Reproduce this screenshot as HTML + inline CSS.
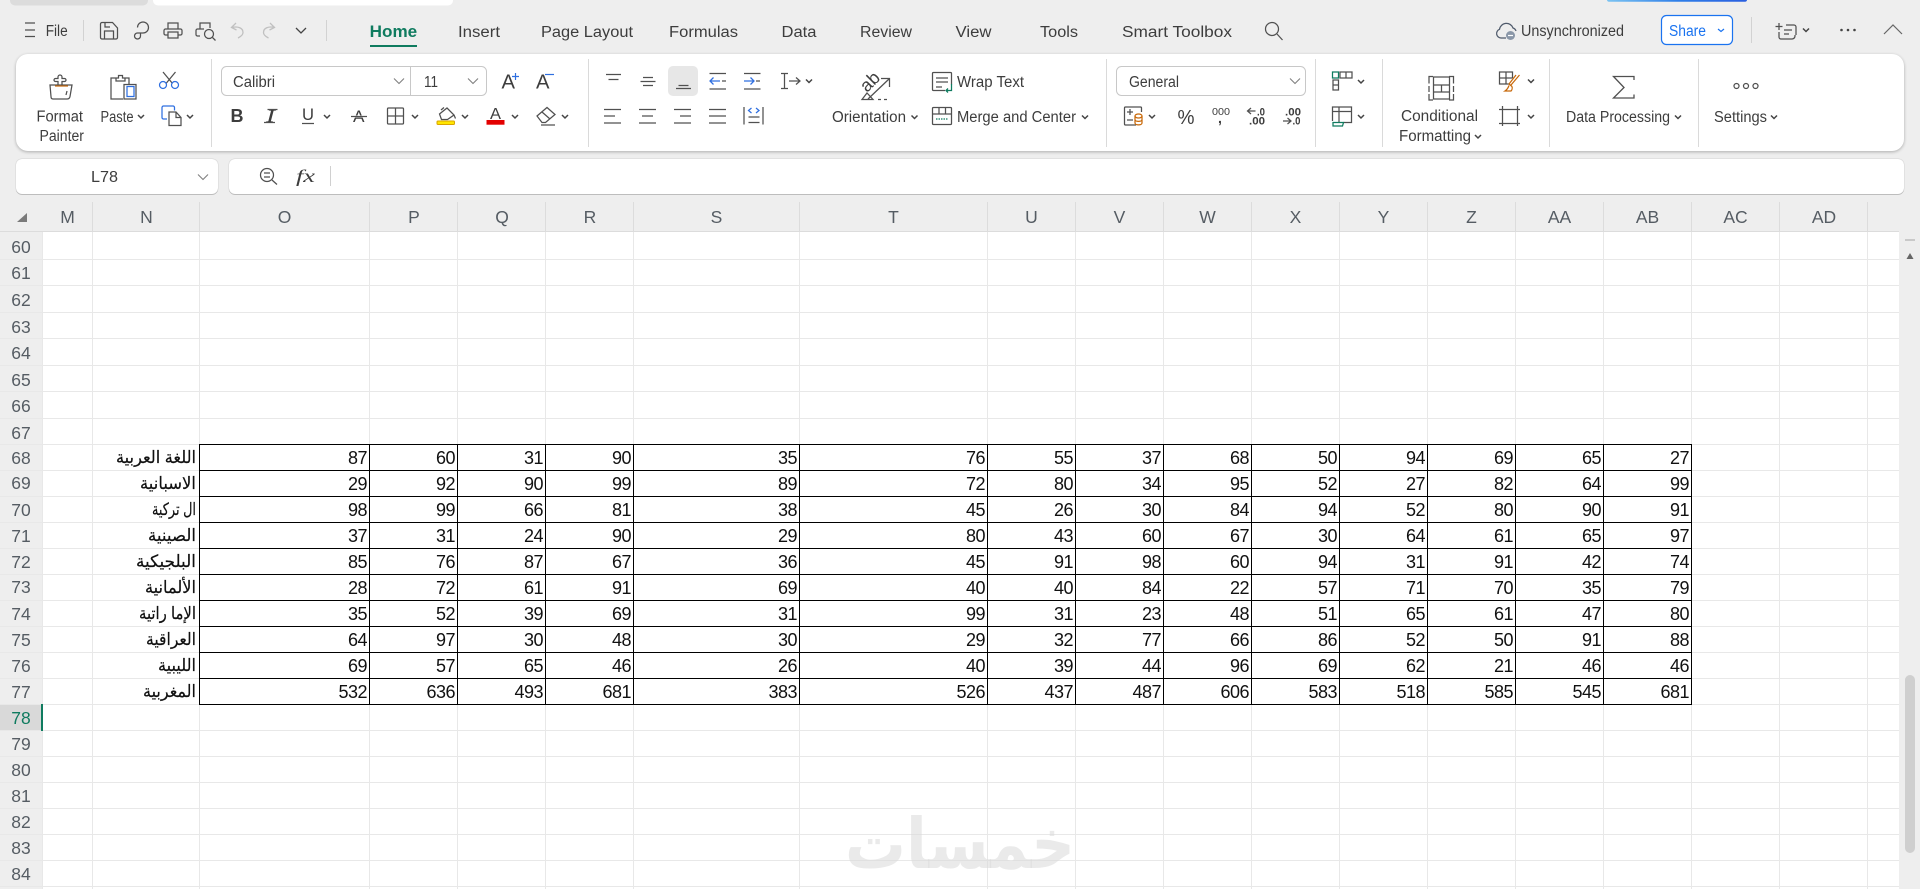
<!DOCTYPE html>
<html lang="en"><head><meta charset="utf-8"><title>Spreadsheet</title>
<style>
html,body{margin:0;padding:0;width:1920px;height:889px;overflow:hidden;background:#eee;font-family:"Liberation Sans","DejaVu Sans",sans-serif}
.card{position:absolute;background:#fff;box-sizing:border-box}
#rb{left:16px;top:54px;width:1888px;height:97px;border-radius:12px;box-shadow:0 1px 3px rgba(0,0,0,.28)}
#nb{left:16px;top:159px;width:201.5px;height:34.5px;border-radius:6px;box-shadow:0 0 1px rgba(0,0,0,.35),0 1px 0 #c8c8c8}
#fb{left:229px;top:159px;width:1675px;height:34.5px;border-radius:6px;box-shadow:0 0 1px rgba(0,0,0,.35),0 1px 0 #c8c8c8}
svg#s{position:absolute;left:0;top:0}
svg text{font-family:"Liberation Sans","DejaVu Sans",sans-serif;fill:#3d3d3d}
.t{font-size:15.5px}
.h{font-size:17.5px;fill:#555c63;text-anchor:middle}
.a{font-size:17px;fill:#111;stroke:#111;stroke-width:.2;direction:rtl;text-anchor:start}
.i{fill:none;stroke:#505050;stroke-width:1.25}
.b{fill:none;stroke:#2f6fe0;stroke-width:1.25}
.g{fill:none;stroke:#0f7b5f;stroke-width:1.25}
.o{fill:none;stroke:#c8690a;stroke-width:1.25}
table{position:absolute;left:199px;top:444px;border-collapse:collapse;table-layout:fixed;width:1493px}
td{border:1px solid #000;height:26px;padding:2px 2px 0 0;text-align:right;font-size:18px;letter-spacing:-.5px;line-height:23px;color:#111;box-sizing:border-box;overflow:hidden}
tr{height:26px}
</style></head><body>
<div class="card" id="rb"></div><div class="card" id="nb"></div><div class="card" id="fb"></div>
<svg id="s" width="1920" height="889" viewBox="0 0 1920 889" xmlns="http://www.w3.org/2000/svg">
<defs>
<linearGradient id="bl" x1="0" x2="1"><stop offset="0" stop-color="#7cc4f2"/><stop offset=".5" stop-color="#2f7fe8"/><stop offset="1" stop-color="#2a5fe0"/></linearGradient>
<path id="c" d="M-3-1.5l3 3 3-3" fill="none" stroke="#444" stroke-width="1.5"/>
<path id="v" d="M-5-2.5l5 5 5-5" fill="none" stroke="#808080" stroke-width="1.1"/>
</defs>
<!-- top strip -->
<rect x="10" y="-6" width="138" height="11.5" rx="5" fill="#dcdcdc"/>
<rect x="153" y="-6" width="300" height="11.5" rx="5" fill="#fff"/>
<rect x="1607" y="-4" width="140" height="5.7" rx="2" fill="url(#bl)"/>
<!-- title row -->
<path class="i" d="M25 23h10M25 30h10M25 36.5h10"/>
<text class="t" x="45.7" y="36" textLength="22" lengthAdjust="spacingAndGlyphs">File</text>
<path d="M83.5 20v21M326.5 20v21M1751.5 17v26" stroke="#d2d2d2" fill="none"/>
<path class="i" d="M102 22.5h10.5l5 5.5v9.5a1.5 1.5 0 0 1-1.5 1.5h-14a1.5 1.5 0 0 1-1.5-1.5V24a1.5 1.5 0 0 1 1.5-1.5zM104.5 39v-8h9v8M105 23v4h5"/>
<path class="i" d="M137.5 27.5a5.5 5.5 0 1 1 5.5 5.5h-5.5a3 3 0 1 0 3 3V33"/>
<path class="i" d="M168 29v-6h10v6M168 35h-2.5a1.5 1.5 0 0 1-1.5-1.5v-3a1.5 1.5 0 0 1 1.5-1.5h15a1.5 1.5 0 0 1 1.5 1.5v3a1.5 1.5 0 0 1-1.5 1.5H178M168 32h10v6h-10z"/>
<path class="i" d="M200 29v-6h10v5M200 36h-2.5a1.5 1.5 0 0 1-1.5-1.5v-4a1.5 1.5 0 0 1 1.5-1.5H204M212.5 37.5l3 3"/><circle class="i" cx="209" cy="34" r="4.5"/>
<path d="M236 23l-4.500 4.500 5 2.500M232 27.500c6-1.500 11 .5 11 5 0 3-3 4.500-5 5.500" fill="none" stroke="#c0c0c0" stroke-width="1.3"/>
<path d="M270 23l4.500 4.500-5 2.500M274.500 27.500c-6-1.500-11 .5-11 5 0 3 3 4.500 5 5.500" fill="none" stroke="#c0c0c0" stroke-width="1.3"/>
<path d="M296 28l5 5 5-5" fill="none" stroke="#444" stroke-width="1.3"/>
<!-- tabs -->
<text x="369.7" y="37" font-size="16.500" font-weight="700" style="fill:#0f7b5f" textLength="47.500" lengthAdjust="spacingAndGlyphs">Home</text>
<rect x="370" y="45" width="47" height="2" fill="#0f7b5f"/>
<text class="t" font-size="16" x="458" y="37" textLength="42" lengthAdjust="spacingAndGlyphs">Insert</text>
<text class="t" x="541" y="37" textLength="92" lengthAdjust="spacingAndGlyphs">Page Layout</text>
<text class="t" x="669" y="37" textLength="69" lengthAdjust="spacingAndGlyphs">Formulas</text>
<text class="t" x="781.500" y="37" textLength="35" lengthAdjust="spacingAndGlyphs">Data</text>
<text class="t" x="860" y="37" textLength="52" lengthAdjust="spacingAndGlyphs">Review</text>
<text class="t" x="955.500" y="37" textLength="36" lengthAdjust="spacingAndGlyphs">View</text>
<text class="t" x="1040" y="37" textLength="38" lengthAdjust="spacingAndGlyphs">Tools</text>
<text class="t" x="1122" y="37" textLength="110" lengthAdjust="spacingAndGlyphs">Smart Toolbox</text>
<circle class="i" cx="1272" cy="29" r="6.500"/><path class="i" d="M1277 34l5.500 6"/>
<!-- top right -->
<path class="i" style="stroke:#4f5a6b" d="M1506 38h-5a4.500 4.500 0 0 1-1.500-8.700 7 7 0 0 1 13.500-1.300 4.500 4.500 0 0 1 3 3"/>
<circle cx="1510.500" cy="35.500" r="4.500" fill="#8a97a8"/><path d="M1508 35.500h5" stroke="#fff" stroke-width="1.200"/>
<text class="t" x="1521" y="36" textLength="103" lengthAdjust="spacingAndGlyphs">Unsynchronized</text>
<rect x="1661.500" y="15.500" width="71" height="29" rx="5" fill="#fff" stroke="#1a73f0" stroke-width="1.200"/>
<text class="t" x="1669" y="36" style="fill:#1a73f0" textLength="37" lengthAdjust="spacingAndGlyphs">Share</text>
<path d="M1718 29l3 2.500 3-2.500" fill="none" stroke="#1a73f0" stroke-width="1.200"/>
<path class="i" d="M1779 23v7M1775.500 26.500h7M1786 25h8a2 2 0 0 1 2 2v8M1779 32v5a2 2 0 0 0 2 2h11a3 3 0 0 0 3-3v-1M1784 30h8M1784 34h5"/>
<use href="#c" x="1806" y="30"/>
<circle cx="1841.500" cy="30" r="1.300" fill="#444"/><circle cx="1848" cy="30" r="1.300" fill="#444"/><circle cx="1854.500" cy="30" r="1.300" fill="#444"/>
<path d="M1884 34l9-9 9 9" fill="none" stroke="#666" stroke-width="1.200"/>
<!-- ribbon dividers -->
<path d="M211.500 59v88M588.500 59v88M1106.500 59v88M1315.500 59v88M1382.500 59v88M1549.500 59v88M1698.500 59v88" stroke="#dadada" fill="none"/>
<!-- clipboard group -->
<path class="i" d="M50 85h22l-2 11.500q-.5 2.500-3 2.500H53q-2 0-2-2.500zM58 85v-3.500h-2.500a1.500 1.500 0 0 1 0-3H58V77a2 2 0 0 1 4 0v1.500h2.500a1.500 1.500 0 0 1 0 3H62V85M66 95l1-4"/>
<path d="M55 86h13" stroke="#c8690a" stroke-width="1.200"/>
<text class="t" x="36.500" y="121.500" textLength="46.500" lengthAdjust="spacingAndGlyphs">Format</text>
<text class="t" x="39.500" y="141" textLength="44.500" lengthAdjust="spacingAndGlyphs">Painter</text>
<path class="i" d="M116 78h-5v21h12M125 78h4v6M116 81v-3h2.500v-2.500h4V78h2.500v3zM124 84.500h12v14.500h-12z"/>
<rect class="b" x="127" y="86.500" width="7" height="10"/>
<text class="t" x="100.500" y="122" textLength="33" lengthAdjust="spacingAndGlyphs">Paste</text>
<use href="#c" x="141" y="116.500"/>
<path class="i" d="M163 72l9.500 11.500M175.500 72L166 83.500"/>
<circle class="b" cx="163" cy="85" r="3.500"/><circle class="b" cx="175" cy="85" r="3.500"/>
<path class="b" d="M167 119h-3.500a1.500 1.500 0 0 1-1.500-1.500v-10a1.500 1.500 0 0 1 1.500-1.500H173a1.500 1.500 0 0 1 1.500 1.500v3"/>
<path class="i" d="M169 112h7l5 5.500v8h-12zM176 112v5.500h5"/>
<use href="#c" x="190" y="116.500"/>
<!-- font -->
<rect x="221.500" y="66.500" width="265" height="29" rx="5" fill="#fff" stroke="#c8c8c8"/>
<path d="M410.500 66.500v29" stroke="#c8c8c8"/>
<text class="t" x="233" y="87" textLength="42" lengthAdjust="spacingAndGlyphs">Calibri</text>
<use href="#v" x="399" y="81"/>
<text class="t" x="424" y="87" textLength="14" lengthAdjust="spacingAndGlyphs">11</text>
<use href="#v" x="473" y="81"/>
<text x="501.500" y="88.500" font-size="20" textLength="13.500" lengthAdjust="spacingAndGlyphs">A</text>
<path d="M512 76.500h7M515.500 73v7" stroke="#2f6fe0" stroke-width="1.200"/>
<text x="536" y="88.500" font-size="20" textLength="13.500" lengthAdjust="spacingAndGlyphs">A</text>
<path d="M545 74.500h9" stroke="#2f6fe0" stroke-width="1.200"/>
<text x="230.500" y="122" font-size="18" font-weight="700">B</text>
<text x="266" y="122" font-size="18" style="font-family:'Liberation Serif',serif;font-style:italic" textLength="9" lengthAdjust="spacingAndGlyphs">I</text>
<path class="i" d="M264 122.500h11M267.500 109.500h10"/>
<text x="302" y="120" font-size="16.500" textLength="12" lengthAdjust="spacingAndGlyphs">U</text><path class="i" d="M302 123.500h12"/>
<use href="#c" x="327" y="116.500"/>
<text x="353" y="122" font-size="17" textLength="11.500" lengthAdjust="spacingAndGlyphs">A</text><path class="i" d="M351 116.500h16" style="stroke:#fff;stroke-width:2"/><path class="i" d="M351 116.500h16"/>
<path class="i" d="M387.500 109a1 1 0 0 1 1-1h14a1 1 0 0 1 1 1v14a1 1 0 0 1-1 1h-14a1 1 0 0 1-1-1zM395.500 108v16M387.500 116h16"/>
<use href="#c" x="415" y="116.500"/>
<path class="i" d="M447 108l7 7-6.500 4.500h-6l-2-5.500zM441 110l3-2.500M454 115l1.500 3.500"/>
<rect x="437" y="121" width="17.500" height="3.500" rx="1" fill="#ffe600" stroke="#d9a400"/>
<use href="#c" x="465" y="116.500"/>
<text x="490" y="119" font-size="15.500" textLength="11" lengthAdjust="spacingAndGlyphs">A</text>
<rect x="486.500" y="120" width="18" height="4.700" fill="#e30000"/>
<use href="#c" x="515" y="116.500"/>
<path class="i" d="M537 116l10-8.500 8 7-9.500 8H542zM542 112l8 7M541 125h14"/>
<use href="#c" x="565" y="116.500"/>
<!-- align -->
<rect x="668" y="66" width="30" height="30" rx="5" fill="#e7e7e7"/>
<path class="i" d="M606 74.500h15M608.500 79.500h10M643 77.500h10M640.500 81.500h15M643 85.500h10M678.500 85.500h10M676 88.500h15M709.500 73.500h16.500M709.500 89h16.500M722 81h4M744 73.500h16.500M744 89h16.500M744 81h0M756 81h4M781 73.500h7M781 88.500h7M784.500 73.500v15M789 81h11M796 77.500l4 3.500-4 3.500"/>
<path class="b" d="M710 81h10M713.500 77.500L710 81l3.500 3.500M744 81h10M750.500 77.500L754 81l-3.500 3.500"/>
<use href="#c" x="809" y="81"/>
<path class="i" d="M604 109.500h17M604 116h11M604 123h17M639 109.500h17M642 116h11M639 123h17M674 109.500h17M680 116h11M674 123h17M709 109.500h17M709 116h17M709 123h17M744 107v17.500M763 107v17.500M748.500 117h11M748.500 122.500h11"/>
<path class="b" d="M751.500 108l-3 2.500 3 2.500M756 108l3 2.500-3 2.500"/>
<!-- orientation -->
<text transform="translate(867 93) rotate(-45)" font-size="18">ab</text>
<path class="i" d="M868 99l21-20M881 78.500h8.500v8.500M862 99.500l5-6.500 6 6.500zM878 99.500h3M884 99.500h3"/>
<text class="t" x="832" y="122" textLength="74" lengthAdjust="spacingAndGlyphs">Orientation</text>
<use href="#c" x="914.500" y="117"/>
<path class="i" d="M945 90.500h-11.500a1 1 0 0 1-1-1v-16a1 1 0 0 1 1-1h17a1 1 0 0 1 1 1v11M936 78h12M936 82h12M936 87h6"/>
<path class="g" d="M951.500 84v6.500H946M948 88.500l-2 2 2 2"/>
<text class="t" x="957" y="87" textLength="67" lengthAdjust="spacingAndGlyphs">Wrap Text</text>
<rect class="i" x="932.500" y="107.500" width="19" height="17" rx="1"/>
<path class="i" d="M932.500 114h19M939 107.500v6.500M945.500 107.500v6.500"/>
<path class="g" d="M936 119h12" stroke-dasharray="1.500 1"/>
<text class="t" x="957" y="122" textLength="119" lengthAdjust="spacingAndGlyphs">Merge and Center</text>
<use href="#c" x="1085" y="117"/>
<!-- number -->
<rect x="1116.500" y="66.500" width="189" height="29" rx="5" fill="#fff" stroke="#c8c8c8"/>
<text class="t" x="1129" y="87" textLength="50" lengthAdjust="spacingAndGlyphs">General</text>
<use href="#v" x="1295" y="81"/>
<path class="i" d="M1136 125h-10.500a1 1 0 0 1-1-1v-16a1 1 0 0 1 1-1h15a1 1 0 0 1 1 1v4M1127 112h6M1130 109v6M1127 120h6"/>
<ellipse class="o" cx="1138.500" cy="116" rx="3.500" ry="2"/><path class="o" d="M1135 116v7c0 2.500 7 2.500 7 0v-7M1135 119.500c0 2.500 7 2.500 7 0"/>
<use href="#c" x="1152" y="116.500"/>
<text x="1177.500" y="124" font-size="20" textLength="17" lengthAdjust="spacingAndGlyphs">%</text>
<text x="1212" y="115" font-size="10.500" textLength="18" lengthAdjust="spacingAndGlyphs">000</text>
<text x="1218" y="123" font-size="14" font-weight="700">,</text>
<path class="i" d="M1247.500 111h8M1251 108l-3.500 3 3.500 3"/>
<text x="1257" y="115.500" font-size="11" font-weight="700" textLength="8" lengthAdjust="spacingAndGlyphs">.0</text>
<text x="1249" y="124.500" font-size="11" font-weight="700" textLength="16" lengthAdjust="spacingAndGlyphs">.00</text>
<text x="1285" y="115.500" font-size="11" font-weight="700" textLength="16" lengthAdjust="spacingAndGlyphs">.00</text>
<path class="i" d="M1283 121h8M1287.500 118l3.500 3-3.500 3"/>
<text x="1292.500" y="124.500" font-size="11" font-weight="700" textLength="8" lengthAdjust="spacingAndGlyphs">.0</text>
<!-- layout -->
<rect class="g" x="1332.500" y="72" width="6" height="6"/>
<path class="i" d="M1340 72h12v6h-12zM1346 72v6M1333 80h5.500v10H1333zM1333 85h5.500"/>
<use href="#c" x="1361" y="81.500"/>
<path class="i" d="M1332.500 121v-14h19v15.500h-8M1332.500 111.500h19M1339 107v15"/>
<path class="g" d="M1333 122.500h10.500l-1 3.500H1333z"/>
<use href="#c" x="1361" y="116.500"/>
<!-- conditional -->
<path class="i" d="M1433 76.500h-4v7M1429 86v6M1429 94v6h4M1449 76.500h4.500v7M1453.500 86v6M1453.500 94v6H1449M1433.500 77h16v22h-16zM1433.500 85h16M1433.500 92h16M1441.500 85v7"/>
<text class="t" x="1401" y="121" textLength="77" lengthAdjust="spacingAndGlyphs">Conditional</text>
<text class="t" x="1399" y="141" textLength="72" lengthAdjust="spacingAndGlyphs">Formatting</text>
<use href="#c" x="1478" y="136.500"/>
<path class="i" d="M1510 84h-10.500V72h13v6M1499.500 78h13M1506 72v12"/>
<path class="o" d="M1519.500 75l-8.500 10M1516 75l-7 9 3 2.500M1509 85.500c-1 3-2.500 4.500-4 5.500h6c1-1 1.500-3 1-4.500"/>
<use href="#c" x="1531" y="81"/>
<path class="i" d="M1502.500 106v20M1517.500 106v20M1499 109.500h21M1499 123.500h21"/>
<use href="#c" x="1531" y="116.500"/>
<!-- data -->
<path class="i" d="M1634 80v-3.500h-20.500l10.500 11-10.500 10.500H1634v-3.500" style="stroke-width:1.300"/>
<text class="t" x="1566" y="122" textLength="104" lengthAdjust="spacingAndGlyphs">Data Processing</text>
<use href="#c" x="1678" y="117"/>
<circle class="i" cx="1736.500" cy="86" r="2.500"/><circle class="i" cx="1746" cy="86" r="2.500"/><circle class="i" cx="1755.500" cy="86" r="2.500"/>
<text class="t" x="1714" y="122" textLength="53" lengthAdjust="spacingAndGlyphs">Settings</text>
<use href="#c" x="1774" y="117"/>
<!-- formula bar -->
<text x="91" y="182" font-size="16" textLength="27" lengthAdjust="spacingAndGlyphs">L78</text>
<use href="#v" x="203" y="177"/>
<circle class="i" cx="267" cy="175" r="6.500"/><path class="i" d="M264 173h6M264 177h6M272 180l5 4.500"/>
<text x="296" y="182" font-size="18" style="font-family:'Liberation Serif',serif;font-style:italic" textLength="19" lengthAdjust="spacingAndGlyphs">fx</text>
<path d="M330.500 166v20" stroke="#d0d0d0"/>
<!-- sheet -->
<rect x="43" y="232" width="1856" height="657" fill="#fff"/>
<rect x="0" y="704" width="43" height="27" fill="#d9d9d9"/>
<path d="M0 231.500H1899" stroke="#dcdcdc"/>
<path d="M92.500 202v30M199.500 202v30M369.500 202v30M457.500 202v30M545.500 202v30M633.500 202v30M799.500 202v30M987.500 202v30M1075.500 202v30M1163.500 202v30M1251.500 202v30M1339.500 202v30M1427.500 202v30M1515.500 202v30M1603.500 202v30M1691.500 202v30M1779.500 202v30M1867.500 202v30" stroke="#dcdcdc"/>
<path d="M42.500 232V889M92.500 232V889M199.500 232V889M369.500 232V889M457.500 232V889M545.500 232V889M633.500 232V889M799.500 232V889M987.500 232V889M1075.500 232V889M1163.500 232V889M1251.500 232V889M1339.500 232V889M1427.500 232V889M1515.500 232V889M1603.500 232V889M1691.500 232V889M1779.500 232V889M1867.500 232V889M0 259.500H1899M0 285.500H1899M0 312.500H1899M0 338.500H1899M0 365.500H1899M0 391.500H1899M0 418.500H1899M0 444.500H1899M0 470.500H1899M0 496.500H1899M0 522.500H1899M0 548.500H1899M0 574.500H1899M0 600.500H1899M0 626.500H1899M0 652.500H1899M0 678.500H1899M0 704.500H1899M0 730.500H1899M0 756.500H1899M0 782.500H1899M0 808.500H1899M0 834.500H1899M0 860.500H1899M0 886.500H1899" stroke="#e8e8e8" fill="none"/>
<rect x="41" y="704" width="2" height="27" fill="#0f7b5f"/>
<path d="M27 213v9h-10z" fill="#7a7a7a"/>
<!-- column heads -->
<g class="hd">
<text class="h" x="67.500" y="223">M</text><text class="h" x="146.500" y="223">N</text><text class="h" x="284.500" y="223">O</text><text class="h" x="414" y="223">P</text><text class="h" x="502" y="223">Q</text><text class="h" x="590" y="223">R</text><text class="h" x="716.500" y="223">S</text><text class="h" x="893.500" y="223">T</text><text class="h" x="1031.500" y="223">U</text><text class="h" x="1119.500" y="223">V</text><text class="h" x="1207.500" y="223">W</text><text class="h" x="1295.500" y="223">X</text><text class="h" x="1383.500" y="223">Y</text><text class="h" x="1471.500" y="223">Z</text><text class="h" x="1559.500" y="223">AA</text><text class="h" x="1647.500" y="223">AB</text><text class="h" x="1735.500" y="223">AC</text><text class="h" x="1824" y="223">AD</text>
</g>
<!-- row heads -->
<g>
<text class="h" x="21" y="253">60</text><text class="h" x="21" y="279">61</text><text class="h" x="21" y="306">62</text><text class="h" x="21" y="333">63</text><text class="h" x="21" y="359">64</text><text class="h" x="21" y="386">65</text><text class="h" x="21" y="412">66</text><text class="h" x="21" y="439">67</text>
<text class="h" x="21" y="464">68</text><text class="h" x="21" y="489">69</text><text class="h" x="21" y="516">70</text><text class="h" x="21" y="542">71</text><text class="h" x="21" y="568">72</text><text class="h" x="21" y="593">73</text><text class="h" x="21" y="620">74</text><text class="h" x="21" y="646">75</text><text class="h" x="21" y="672">76</text><text class="h" x="21" y="698">77</text>
<text class="h" x="21" y="724" style="fill:#0f7b5f">78</text>
<text class="h" x="21" y="750">79</text><text class="h" x="21" y="776">80</text><text class="h" x="21" y="802">81</text><text class="h" x="21" y="828">82</text><text class="h" x="21" y="854">83</text><text class="h" x="21" y="880">84</text>
</g>
<!-- arabic labels -->
<g>
<text class="a" x="196" y="463" textLength="80" lengthAdjust="spacingAndGlyphs">اللغة العربية</text>
<text class="a" x="196" y="489" textLength="56" lengthAdjust="spacingAndGlyphs">الاسبانية</text>
<text class="a" x="196" y="515" textLength="44" lengthAdjust="spacingAndGlyphs">ال تركية</text>
<text class="a" x="196" y="541" textLength="48" lengthAdjust="spacingAndGlyphs">الصينية</text>
<text class="a" x="196" y="567" textLength="60" lengthAdjust="spacingAndGlyphs">البلجيكية</text>
<text class="a" x="196" y="593" textLength="51" lengthAdjust="spacingAndGlyphs">الألمانية</text>
<text class="a" x="196" y="619" textLength="57" lengthAdjust="spacingAndGlyphs">الإما راتية</text>
<text class="a" x="196" y="645" textLength="50" lengthAdjust="spacingAndGlyphs">العراقية</text>
<text class="a" x="196" y="671" textLength="38" lengthAdjust="spacingAndGlyphs">الليبية</text>
<text class="a" x="196" y="697" textLength="53" lengthAdjust="spacingAndGlyphs">المغربية</text>
</g>
<!-- scrollbar -->
<rect x="1899" y="232" width="21" height="657" fill="#eee"/>
<path d="M1905 240h10" stroke="#bdbdbd" stroke-width="1.500"/>
<path d="M1910 253l3.500 6h-7z" fill="#666"/>
<rect x="1905" y="675" width="10" height="178" rx="5" fill="#cfcfcf"/>
<!-- watermark -->
<text x="1075" y="868" font-size="70" font-weight="700" textLength="230" lengthAdjust="spacingAndGlyphs" style="font-family:'DejaVu Sans',sans-serif;fill:#d8d8d8;fill-opacity:.55;direction:rtl;text-anchor:start">خمسات</text>
</svg>
<table><colgroup><col style="width:170px"><col style="width:88px"><col style="width:88px"><col style="width:88px"><col style="width:166px"><col style="width:188px"><col style="width:88px"><col style="width:88px"><col style="width:88px"><col style="width:88px"><col style="width:88px"><col style="width:88px"><col style="width:88px"><col style="width:88px"></colgroup>
<tr><td>87</td><td>60</td><td>31</td><td>90</td><td>35</td><td>76</td><td>55</td><td>37</td><td>68</td><td>50</td><td>94</td><td>69</td><td>65</td><td>27</td></tr>
<tr><td>29</td><td>92</td><td>90</td><td>99</td><td>89</td><td>72</td><td>80</td><td>34</td><td>95</td><td>52</td><td>27</td><td>82</td><td>64</td><td>99</td></tr>
<tr><td>98</td><td>99</td><td>66</td><td>81</td><td>38</td><td>45</td><td>26</td><td>30</td><td>84</td><td>94</td><td>52</td><td>80</td><td>90</td><td>91</td></tr>
<tr><td>37</td><td>31</td><td>24</td><td>90</td><td>29</td><td>80</td><td>43</td><td>60</td><td>67</td><td>30</td><td>64</td><td>61</td><td>65</td><td>97</td></tr>
<tr><td>85</td><td>76</td><td>87</td><td>67</td><td>36</td><td>45</td><td>91</td><td>98</td><td>60</td><td>94</td><td>31</td><td>91</td><td>42</td><td>74</td></tr>
<tr><td>28</td><td>72</td><td>61</td><td>91</td><td>69</td><td>40</td><td>40</td><td>84</td><td>22</td><td>57</td><td>71</td><td>70</td><td>35</td><td>79</td></tr>
<tr><td>35</td><td>52</td><td>39</td><td>69</td><td>31</td><td>99</td><td>31</td><td>23</td><td>48</td><td>51</td><td>65</td><td>61</td><td>47</td><td>80</td></tr>
<tr><td>64</td><td>97</td><td>30</td><td>48</td><td>30</td><td>29</td><td>32</td><td>77</td><td>66</td><td>86</td><td>52</td><td>50</td><td>91</td><td>88</td></tr>
<tr><td>69</td><td>57</td><td>65</td><td>46</td><td>26</td><td>40</td><td>39</td><td>44</td><td>96</td><td>69</td><td>62</td><td>21</td><td>46</td><td>46</td></tr>
<tr><td>532</td><td>636</td><td>493</td><td>681</td><td>383</td><td>526</td><td>437</td><td>487</td><td>606</td><td>583</td><td>518</td><td>585</td><td>545</td><td>681</td></tr>
</table>
</body></html>
